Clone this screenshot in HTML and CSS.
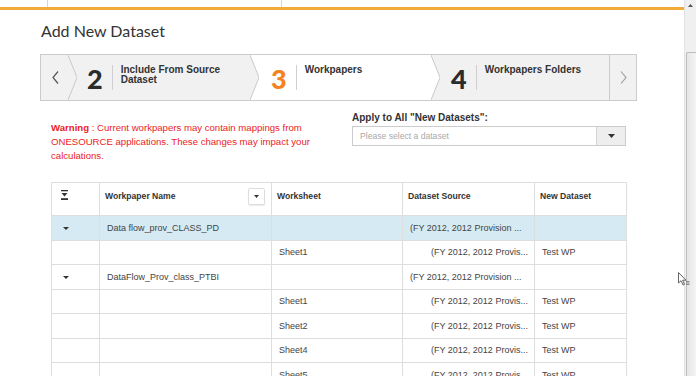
FILE: index.html
```html
<!DOCTYPE html>
<html lang="en">
<head>
    <meta charset="UTF-8">
    <meta name="viewport" content="width=device-width, initial-scale=1.0">
    <title>Add New Dataset</title>
    <link rel="stylesheet" href="styles.css">
</head>
<body>
    <div class="window">
        <div class="page">
            <div class="top-strip"><div class="top-cell"></div></div>

            <div class="content">
                <h1 class="title">Add New Dataset</h1>

                <div class="stepper">
                    <div class="step-nav">
                        <svg width="7" height="13" viewBox="0 0 7 13"><polyline points="6,0.5 1,6.5 6,12.5" fill="none" stroke="#555" stroke-width="1.2"/></svg>
                    </div>
                    <svg class="divider" width="9" height="45" viewBox="0 0 9 45">
                        <rect width="9" height="45" fill="#f1f1f1"/>
                        <polyline points="0,0 9,22.5 0,45" fill="none" stroke="#c9c9c9" stroke-width="1"/>
                    </svg>
                    <div class="step step-2">
                        <span class="step-num">2</span>
                        <span class="step-sep"></span>
                        <span class="step-label">Include From Source<br>Dataset</span>
                    </div>
                    <svg class="divider" width="9" height="45" viewBox="0 0 9 45">
                        <rect width="9" height="45" fill="#fff"/>
                        <polygon points="0,0 9,22.5 0,45" fill="#f1f1f1"/>
                        <polyline points="0,0 9,22.5 0,45" fill="none" stroke="#c9c9c9" stroke-width="1"/>
                    </svg>
                    <div class="step step-3 active">
                        <span class="step-num">3</span>
                        <span class="step-sep"></span>
                        <span class="step-label">Workpapers</span>
                    </div>
                    <svg class="divider" width="9" height="45" viewBox="0 0 9 45">
                        <rect width="9" height="45" fill="#f1f1f1"/>
                        <polygon points="0,0 9,22.5 0,45" fill="#fff"/>
                        <polyline points="0,0 9,22.5 0,45" fill="none" stroke="#c9c9c9" stroke-width="1"/>
                    </svg>
                    <div class="step step-4">
                        <span class="step-num">4</span>
                        <span class="step-sep"></span>
                        <span class="step-label">Workpapers Folders</span>
                    </div>
                    <div class="step-nav step-nav-right">
                        <svg width="7" height="13" viewBox="0 0 7 13"><polyline points="1,0.5 6,6.5 1,12.5" fill="none" stroke="#999" stroke-width="1.1"/></svg>
                    </div>
                </div>

                <div class="options">
                    <p class="warning"><strong>Warning</strong> : Current workpapers may contain mappings from ONESOURCE applications. These changes may impact your calculations.</p>
                    <div class="apply">
                        <label class="apply-label">Apply to All "New Datasets":</label>
                        <div class="select">
                            <span class="select-text">Please select a dataset</span>
                            <span class="select-btn">
                                <svg width="7" height="4" viewBox="0 0 7 4"><polygon points="0,0 7,0 3.5,4" fill="#333"/></svg>
                            </span>
                        </div>
                    </div>
                </div>

                <table class="grid">
                    <colgroup>
                        <col style="width:48px">
                        <col style="width:172px">
                        <col style="width:131px">
                        <col style="width:132px">
                        <col style="width:92px">
                    </colgroup>
                    <thead>
                        <tr>
                            <th class="col-toggle">
                                <svg width="7" height="10" viewBox="0 0 7 10"><rect x="0" y="0" width="7" height="1.3" fill="#333"/><polygon points="0.5,3 6.5,3 3.5,6.5" fill="#333"/><rect x="0" y="8.2" width="7" height="1.8" fill="#333"/></svg>
                            </th>
                            <th>
                                <div class="th-inner">
                                    <span>Workpaper Name</span>
                                    <span class="th-btn"><svg width="5" height="3" viewBox="0 0 5 3"><polygon points="0,0 5,0 2.5,3" fill="#333"/></svg></span>
                                </div>
                            </th>
                            <th><div class="th-inner"><span>Worksheet</span></div></th>
                            <th><div class="th-inner"><span>Dataset Source</span></div></th>
                            <th><div class="th-inner"><span>New Dataset</span></div></th>
                        </tr>
                    </thead>
                    <tbody>
                        <tr class="selected">
                            <td class="col-toggle"><span class="caret"></span></td>
                            <td>Data flow_prov_CLASS_PD</td>
                            <td></td>
                            <td>(FY 2012, 2012 Provision ...</td>
                            <td></td>
                        </tr>
                        <tr>
                            <td></td>
                            <td></td>
                            <td>Sheet1</td>
                            <td class="child">(FY 2012, 2012 Provis...</td>
                            <td>Test WP</td>
                        </tr>
                        <tr>
                            <td class="col-toggle"><span class="caret"></span></td>
                            <td>DataFlow_Prov_class_PTBI</td>
                            <td></td>
                            <td>(FY 2012, 2012 Provision ...</td>
                            <td></td>
                        </tr>
                        <tr>
                            <td></td>
                            <td></td>
                            <td>Sheet1</td>
                            <td class="child">(FY 2012, 2012 Provis...</td>
                            <td>Test WP</td>
                        </tr>
                        <tr>
                            <td></td>
                            <td></td>
                            <td>Sheet2</td>
                            <td class="child">(FY 2012, 2012 Provis...</td>
                            <td>Test WP</td>
                        </tr>
                        <tr>
                            <td></td>
                            <td></td>
                            <td>Sheet4</td>
                            <td class="child">(FY 2012, 2012 Provis...</td>
                            <td>Test WP</td>
                        </tr>
                        <tr>
                            <td></td>
                            <td></td>
                            <td>Sheet5</td>
                            <td class="child">(FY 2012, 2012 Provis...</td>
                            <td>Test WP</td>
                        </tr>
                    </tbody>
                </table>
            </div>
        </div>

        <div class="scrollbar">
            <div class="scroll-up">
                <svg width="5" height="3" viewBox="0 0 5 3"><polygon points="0,3 5,3 2.5,0" fill="#555"/></svg>
            </div>
            <div class="scroll-thumb"></div>
        </div>

        <!-- mouse pointer -->
        <svg class="cursor" width="12" height="14" viewBox="0 0 12 14">
            <polygon points="0.5,0.5 0.5,11 3,8.7 5,13 6.5,12.3 4.6,8.2 8,8.2" fill="#fff" stroke="#555" stroke-width="0.9"/>
            <rect x="8" y="9" width="3.5" height="0.8" fill="#777"/>
            <rect x="8" y="10.6" width="3.5" height="0.8" fill="#777"/>
            <rect x="8" y="12.2" width="3.5" height="0.8" fill="#777"/>
        </svg>
    </div>
</body>
</html>
```

FILE: styles.css
```css
* {
    margin: 0;
    padding: 0;
    box-sizing: border-box;
}

body {
    font-family: "Liberation Sans", Arial, sans-serif;
    background-color: white;
    color: #333;
    overflow: hidden;
}

.window {
    position: relative;
    display: flex;
    width: 696px;
    height: 376px;
    overflow: hidden;
}

.page {
    width: 684px;
    flex: 0 0 684px;
}

/* strip left over from the page behind the dialog */
.top-strip {
    height: 10px;
    border-bottom: 3px solid #f2aa38;
}

.top-cell {
    width: 235px;
    height: 7px;
    margin-left: 47px;
    border-left: 1px solid #d4d4d4;
    border-right: 1px solid #d4d4d4;
}

.content {
    padding-left: 40px;
}

.title {
    font-family: Lato, "Open Sans", sans-serif;
    font-weight: normal;
    font-size: 16px;
    line-height: 20px;
    color: #333;
    margin-top: 11px;
    margin-left: 1px;
    margin-bottom: 13px;
}

/* wizard steps */
.stepper {
    display: flex;
    width: 597px;
    height: 47px;
    border: 1px solid #cbcbcb;
    background-color: #f1f1f1;
}

.step-nav {
    width: 27px;
    display: flex;
    align-items: center;
    justify-content: center;
    padding-left: 1px;
}

.step-nav-right {
    width: 26px;
    border-left: 1px solid #cbcbcb;
}

.divider {
    display: block;
    flex: 0 0 auto;
}

.step {
    display: flex;
    align-items: center;
    padding-left: 10px;
}

.step-2 {
    width: 173px;
}

.step-3 {
    width: 172px;
    padding-left: 12px;
}

.step-4 {
    width: 169px;
    padding-left: 11px;
}

.step.active {
    background-color: white;
}

.step-num {
    font-family: Lato, "Open Sans", sans-serif;
    font-weight: 900;
    font-size: 27px;
    line-height: 27px;
    color: #2b2b2b;
    margin-top: 2px;
}

.step-3 .step-num {
    color: #f58220;
}

.step-sep {
    width: 1px;
    height: 25px;
    background-color: #cfcfcf;
    margin: 0 8px 0 9px;
}

.step-label {
    align-self: flex-start;
    margin-top: 10px;
    font-size: 10px;
    line-height: 10px;
    font-weight: bold;
    color: #333;
}

/* warning + apply selector */
.options {
    display: flex;
    align-items: flex-start;
    margin-top: 11px;
}

.warning {
    width: 290px;
    margin-left: 11px;
    margin-right: 11px;
    margin-top: 9px;
    font-size: 9.6px;
    line-height: 14px;
    color: #ec1c24;
}

.apply {
    width: 274px;
}

.apply-label {
    display: block;
    font-size: 10px;
    line-height: 12px;
    font-weight: bold;
    color: #333;
    margin-bottom: 2px;
}

.select {
    display: flex;
    height: 20px;
    border: 1px solid #cccccc;
    background-color: white;
}

.select-text {
    flex: 1;
    font-size: 8.6px;
    line-height: 18px;
    color: #aaa;
    padding-left: 7px;
}

.select-btn {
    width: 29px;
    display: flex;
    align-items: center;
    justify-content: center;
    background-color: #eeeeee;
    border-left: 1px solid #d6d6d6;
}

/* data grid */
.grid {
    margin-top: 19px;
    margin-left: 11px;
    width: 575px;
    table-layout: fixed;
    border-collapse: collapse;
    font-size: 9px;
    color: #444;
}

.grid th,
.grid td {
    border: 1px solid #dedede;
    text-align: left;
    white-space: nowrap;
    overflow: hidden;
}

.grid th {
    height: 33px;
    vertical-align: top;
    padding: 5px 6px 0 5px;
    font-size: 8.6px;
    font-weight: bold;
    color: #333;
}

.grid th.col-toggle {
    padding-left: 9px;
    padding-top: 7px;
}

.th-inner {
    display: flex;
    justify-content: space-between;
    align-items: center;
    height: 16px;
}

.th-btn {
    width: 17px;
    height: 17px;
    display: flex;
    align-items: center;
    justify-content: center;
    border: 1px solid #dddddd;
    border-radius: 2px;
    background-color: white;
    box-shadow: 0 1px 1px rgba(0, 0, 0, 0.08);
}

.grid td {
    height: 24.5px;
    padding: 0 7px;
    vertical-align: middle;
}

.grid td.col-toggle {
    padding-left: 11px;
}

.grid td.child {
    padding-left: 28px;
}

.grid tr.selected td {
    background-color: #d5eaf3;
}

.caret {
    display: inline-block;
    width: 0;
    height: 0;
    border-left: 3px solid transparent;
    border-right: 3px solid transparent;
    border-top: 3px solid #333;
    vertical-align: middle;
}

/* window scrollbar */
.scrollbar {
    flex: 0 0 12px;
    background-color: #f0f0f0;
    border-left: 1px solid #e2e2e2;
}

.scroll-up {
    height: 17px;
    display: flex;
    justify-content: center;
    padding-top: 4px;
}

.scroll-up svg {
    display: block;
}

.scroll-thumb {
    height: 340px;
    margin-top: 35px;
    margin-left: 1px;
    border: 1px solid #bdbdbd;
    border-right: none;
    border-radius: 2px 0 0 0;
    background: linear-gradient(to right, #e6e6e6, #f4f4f4);
}

.cursor {
    position: absolute;
    left: 678px;
    top: 272px;
}
```
